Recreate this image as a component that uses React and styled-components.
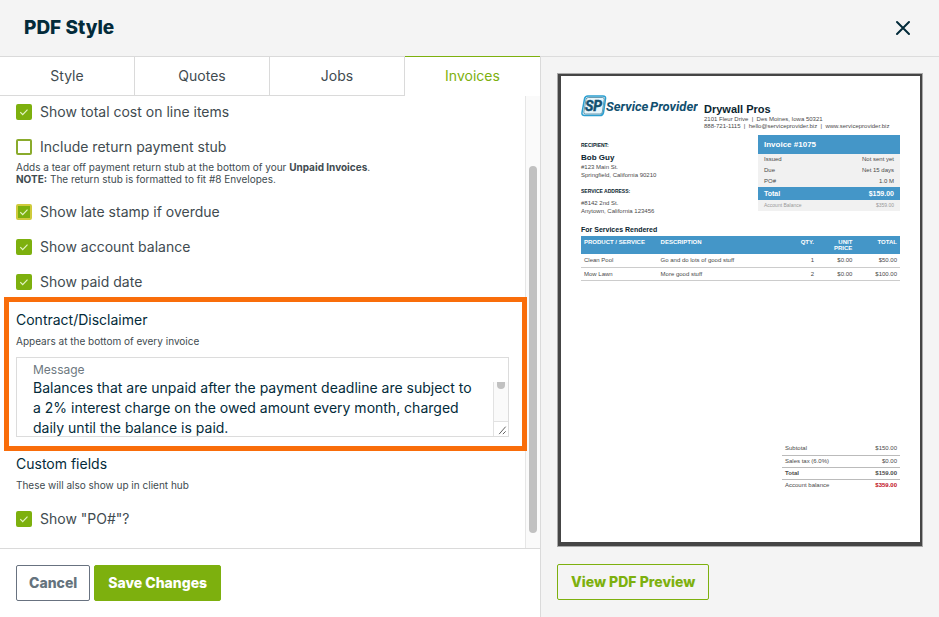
import React, { useState } from "react";
import styled, { createGlobalStyle } from "styled-components";

const GlobalStyle = createGlobalStyle`
    *, *::before, *::after {
        box-sizing: border-box;
    }
    body {
        margin: 0;
        background: #fff;
        color: #414b50;
        font-family: Inter, "Liberation Sans", sans-serif;
        font-size: 14px;
        line-height: 20px;
    }
    h1, h2, h3, p {
        margin: 0;
    }
    button, input, textarea {
        font: inherit;
        color: inherit;
        margin: 0;
    }
`;

const Modal = styled.div`
    min-height: 100vh;
    display: flex;
    flex-direction: column;
`;

const Header = styled.header`
    display: flex;
    align-items: center;
    justify-content: space-between;
    height: 57px;
    padding: 0 24px;
    background: #f4f4f4;
    border-bottom: 1px solid #dcdcdc;
`;

const Title = styled.h1`
    color: #032b3a;
    font-size: 19px;
    font-weight: 800;
    line-height: 24px;
`;

const CloseButton = styled.button`
    display: flex;
    padding: 0;
    border: 0;
    background: none;
    color: #032b3a;
    cursor: pointer;
`;

const Columns = styled.div`
    flex: 1;
    display: grid;
    grid-template-columns: minmax(0, 541fr) minmax(0, 398fr);
`;

const Settings = styled.section`
    display: flex;
    flex-direction: column;
    border-right: 1px solid #dadada;
`;

const Tabs = styled.div`
    display: grid;
    grid-template-columns: repeat(4, 1fr);
    height: 40px;
    margin-top: -1px;
`;

const Tab = styled.button`
    padding: 0;
    background: #fff;
    border: 1px solid #dadada;
    border-left: 0;
    cursor: pointer;
    ${({ $active }) => $active && `
        color: #7db00e;
        border-color: #7db00e transparent transparent;
    `}
    &:last-child {
        border-right: 0;
    }
`;

const ScrollArea = styled.div`
    flex: 1;
    display: flex;
`;

const Options = styled.div`
    flex: 1;
    min-width: 0;
    padding: 6px 16px 17px;
`;

const ScrollTrack = styled.div`
    width: 15px;
    padding: 70px 3px 15px;
    display: flex;
    background: #fafafa;
    border-left: 1px solid #e6e6e6;
`;

const ScrollThumb = styled.div`
    width: 8px;
    border-radius: 4px;
    background: #c1c1c1;
`;

const CheckRow = styled.label`
    display: flex;
    align-items: center;
    gap: 8px;
    margin-bottom: 15px;
    cursor: pointer;
`;

const CheckBox = styled.span`
    display: grid;
    width: 16px;
    height: 16px;
    > * {
        grid-area: 1 / 1;
    }
    svg {
        z-index: 1;
        pointer-events: none;
    }
`;

const CheckInput = styled.input`
    appearance: none;
    width: 16px;
    height: 16px;
    background: #fff;
    border: 2px solid #8aab2c;
    border-radius: 2px;
    &:checked {
        background: #7db00e;
        border-color: ${({ $ringed }) => ($ringed ? "#cfcb3c" : "#7db00e")};
    }
`;

const Hint = styled.p`
    font-size: 10px;
    line-height: 12px;
`;

const StubHint = styled(Hint)`
    margin: -11px 0 17px;
`;

const SectionTitle = styled.h2`
    color: #032b3a;
    font-size: 14px;
    font-weight: 400;
    line-height: 20px;
    margin-bottom: 5px;
`;

/* The frame reaches past the column and onto the scroll bar */
const Highlight = styled.section`
    position: relative;
    z-index: 1;
    margin: -10px -18px 3px -12px;
    padding: 8px 13px 9px 7px;
    border: 5px solid #f96d0a;
`;

const MessageField = styled.div`
    display: flex;
    flex-direction: column;
    height: 80px;
    margin-top: 10px;
    border: 1px solid #dcdcdc;
    color: #032b3a;
    label {
        padding: 3px 16px 0;
        color: #6d7880;
        font-size: 12px;
        line-height: 17px;
    }
`;

const MessageBody = styled.div`
    flex: 1;
    display: flex;
    min-height: 0;
`;

const MessageInput = styled.textarea`
    flex: 1;
    min-width: 0;
    padding: 0 16px;
    border: 0;
    outline: 0;
    overflow: hidden;
    resize: none;
    background: none;
    line-height: 20px;
`;

const MessageScroll = styled.div`
    width: 15px;
    margin-top: 4px;
    display: flex;
    flex-direction: column;
    justify-content: space-between;
    align-items: center;
    background: #fafafa;
    border-left: 1px solid #e2e2e2;
`;

const MessageThumb = styled.div`
    width: 8px;
    height: 7px;
    border-radius: 0 0 4px 4px;
    background: #c1c1c1;
`;

const ResizeCorner = styled.svg`
    border-top: 1px solid #e2e2e2;
    background: #fff;
`;

const CustomFields = styled.section`
    ${CheckRow} {
        margin: 18px 0 0;
    }
`;

const Footer = styled.footer`
    display: flex;
    gap: 4px;
    padding: 16px;
    border-top: 1px solid #dadada;
`;

const Button = styled.button`
    height: 36px;
    padding: 0 13px;
    border: 1px solid #7db00e;
    border-radius: 2px;
    background: ${({ $filled }) => ($filled ? "#7db00e" : "transparent")};
    color: ${({ $filled }) => ($filled ? "#fff" : "#7db00e")};
    font-weight: 800;
    cursor: pointer;
`;

const CancelButton = styled(Button)`
    padding: 0 12px;
    border-color: #687280;
    color: #65737d;
`;

const Preview = styled.section`
    display: flex;
    flex-direction: column;
    align-items: flex-start;
    gap: 17px;
    padding: 16px;
    background: #f4f4f4;
`;

const PdfFrame = styled.div`
    width: 100%;
    border: 1px solid #a9a9a9;
    background: #454545;
    padding: 2px 2px 4px 3px;
`;

const PdfPage = styled.article`
    display: flex;
    flex-direction: column;
    min-height: 466px;
    padding: 19px 20px 51px;
    background: #fff;
    color: #4a4a4a;
    font-family: "Liberation Sans", sans-serif;
    font-size: 6px;
    line-height: 7px;
    table {
        border-collapse: collapse;
    }
    th, td {
        padding: 0 3px;
        text-align: left;
    }
`;

const PdfHeader = styled.div`
    display: flex;
    gap: 6px;
`;

const Company = styled.div`
    padding-top: 7px;
    white-space: nowrap;
    h2 {
        color: #0b2530;
        font-size: 11px;
        line-height: 14px;
    }
`;

const PdfSummary = styled.div`
    display: flex;
    justify-content: space-between;
    margin-top: 5px;
`;

const Client = styled.div`
    padding-top: 6px;
    line-height: 8px;
    h3 {
        color: #0b2530;
        font-size: 5px;
        line-height: 8px;
    }
    strong {
        display: block;
        color: #0b2530;
        font-size: 8px;
        line-height: 10px;
    }
    p {
        margin: 4px 0 8px;
    }
`;

const InvoiceTable = styled.table`
    width: 142px;
    background: #f1f1f1;
    align-self: flex-start;
    th, td {
        height: 11px;
        padding: 0 6px;
        font-weight: 400;
    }
    td {
        text-align: right;
    }
    thead th {
        height: 19px;
        background: #4496c8;
        color: #fff;
        font-size: 8px;
        font-weight: 700;
    }
`;

const TotalRow = styled.tr`
    background: #4496c8;
    color: #fff;
    th, td {
        height: 13px;
        font-size: 7px;
        font-weight: 700;
    }
`;

const BalanceRow = styled.tr`
    color: #999;
    font-size: 5px;
`;

const ServicesTitle = styled.h3`
    margin-top: 1px;
    color: #0b2530;
    font-size: 7px;
    line-height: 12px;
`;

const ServicesTable = styled.table`
    width: 100%;
    thead th {
        height: 18px;
        padding-top: 3px;
        vertical-align: top;
        background: #4496c8;
        color: #fff;
        line-height: 6px;
    }
    tbody tr {
        border-bottom: 1px solid #ccc;
    }
    tbody td {
        height: 13px;
        padding-top: 1px;
    }
    th:nth-child(n + 3), td:nth-child(n + 3) {
        text-align: right;
    }
`;

const TotalsTable = styled.table`
    width: 118px;
    margin: auto 0 0 auto;
    tr + tr {
        border-top: 1px solid #bbb;
    }
    th, td {
        height: 12px;
        font-weight: 400;
    }
    td {
        text-align: right;
    }
    tr:nth-child(3) > * {
        font-weight: 700;
    }
    tr:last-child td {
        color: #c00d1c;
        font-weight: 700;
    }
`;

const Logo = () => (
  <svg width="117" height="22" viewBox="0 0 117 22" role="img" aria-label="Service Provider">
    <path
      d="M7 1H22q3 0 2.500 3L22.500 17.500q-.6 3-3.600 3H3.500q-3 0-2.500-3L3.500 4q.5-3 3.500-3z"
      fill="#e6f5fb"
      stroke="#2b9fd0"
      strokeWidth="1.500"
    />
    <path
      d="M7.500 2.500H21.500q2 0 1.700 2L21.300 17q-.4 2-2.400 2H4.500q-2 0-1.700-2L5 4.500q.4-2 2.500-2z"
      fill="none"
      stroke="#17607f"
      strokeWidth=".6"
    />
    <g fontFamily="Roboto, 'Liberation Sans', sans-serif" fontWeight="700" fontStyle="italic" fill="#125070">
      <text x="4" y="16" fontSize="14" stroke="#125070" strokeWidth=".5">SP</text>
      <text x="25" y="16" fontSize="13">Service</text>
      <text x="69" y="16" fontSize="13">Provider</text>
    </g>
  </svg>
);

const CheckOption = ({ label, checked, ringed }) => {
  const [on, setOn] = useState(checked);
  return (
    <CheckRow>
      <CheckBox>
        <CheckInput type="checkbox" checked={on} $ringed={ringed} onChange={() => setOn(!on)} />
        {on && (
          <svg width="16" height="16" viewBox="0 0 16 16" fill="none" stroke="#e4f5c4" strokeWidth="1.200">
            <path d="M4.300 8.200l2.400 2.500 4.800-5" />
          </svg>
        )}
      </CheckBox>
      {label}
    </CheckRow>
  );
};

const TABS = ["Style", "Quotes", "Jobs", "Invoices"];

const MESSAGE =
  "Balances that are unpaid after the payment deadline are subject to a 2% interest charge on the owed amount every month, charged daily until the balance is paid.";

const Invoice = () => (
  <PdfPage>
    <PdfHeader>
      <Logo />
      <Company>
        <h2>Drywall Pros</h2>
        <p>2101 Fleur Drive &nbsp;|&nbsp; Des Moines, Iowa 50321</p>
        <p>888-721-1115 &nbsp;|&nbsp; hello@serviceprovider.biz &nbsp;|&nbsp; www.serviceprovider.biz</p>
      </Company>
    </PdfHeader>
    <PdfSummary>
      <Client>
        <h3>RECIPIENT:</h3>
        <p>
          <strong>Bob Guy</strong>
          #123 Main St.
          <br />
          Springfield, California 90210
        </p>
        <h3>SERVICE ADDRESS:</h3>
        <p>
          #8142 2nd St.
          <br />
          Anytown, California 123456
        </p>
      </Client>
      <InvoiceTable>
        <thead>
          <tr><th colSpan={2}>Invoice #1075</th></tr>
        </thead>
        <tbody>
          <tr><th>Issued</th><td>Not sent yet</td></tr>
          <tr><th>Due</th><td>Net 15 days</td></tr>
          <tr><th>PO#</th><td>1.0 M</td></tr>
          <TotalRow><th>Total</th><td>$159.00</td></TotalRow>
          <BalanceRow><th>Account Balance</th><td>$359.00</td></BalanceRow>
        </tbody>
      </InvoiceTable>
    </PdfSummary>
    <ServicesTitle>For Services Rendered</ServicesTitle>
    <ServicesTable>
      <colgroup>
        <col width="24%" />
        <col width="38%" />
        <col width="12%" />
        <col width="12%" />
        <col width="14%" />
      </colgroup>
      <thead>
        <tr>
          <th>PRODUCT / SERVICE</th>
          <th>DESCRIPTION</th>
          <th>QTY.</th>
          <th>UNIT PRICE</th>
          <th>TOTAL</th>
        </tr>
      </thead>
      <tbody>
        <tr><td>Clean Pool</td><td>Go and do lots of good stuff</td><td>1</td><td>$0.00</td><td>$50.00</td></tr>
        <tr><td>Mow Lawn</td><td>More good stuff</td><td>2</td><td>$0.00</td><td>$100.00</td></tr>
      </tbody>
    </ServicesTable>
    <TotalsTable>
      <tbody>
        <tr><th>Subtotal</th><td>$150.00</td></tr>
        <tr><th>Sales tax (6.0%)</th><td>$0.00</td></tr>
        <tr><th>Total</th><td>$159.00</td></tr>
        <tr><th>Account balance</th><td>$359.00</td></tr>
      </tbody>
    </TotalsTable>
  </PdfPage>
);

const App = () => {
  const [tab, setTab] = useState("Invoices");

  return (
    <Modal>
      <GlobalStyle />
      <Header>
        <Title>PDF Style</Title>
        <CloseButton aria-label="Close">
          <svg width="24" height="24" viewBox="0 0 24 24" fill="none" stroke="currentColor" strokeWidth="2" strokeLinecap="round">
            <path d="M6 6l12 12M18 6L6 18" />
          </svg>
        </CloseButton>
      </Header>
      <Columns>
        <Settings>
          <Tabs role="tablist">
            {TABS.map((name) => (
              <Tab key={name} role="tab" aria-selected={tab === name} $active={tab === name} onClick={() => setTab(name)}>
                {name}
              </Tab>
            ))}
          </Tabs>
          <ScrollArea>
            <Options>
              <CheckOption label="Show total cost on line items" checked />
              <CheckOption label="Include return payment stub" checked={false} />
              <StubHint>
                Adds a tear off payment return stub at the bottom of your <strong>Unpaid Invoices</strong>.
                <br />
                <strong>NOTE:</strong> The return stub is formatted to fit #8 Envelopes.
              </StubHint>
              <CheckOption label="Show late stamp if overdue" checked ringed />
              <CheckOption label="Show account balance" checked />
              <CheckOption label="Show paid date" checked />
              <Highlight>
                <SectionTitle>Contract/Disclaimer</SectionTitle>
                <Hint>Appears at the bottom of every invoice</Hint>
                <MessageField>
                  <label htmlFor="message">Message</label>
                  <MessageBody>
                    <MessageInput id="message" defaultValue={MESSAGE} />
                    <MessageScroll>
                      <MessageThumb />
                      <ResizeCorner width="14" height="15" viewBox="0 0 14 15" stroke="#555" strokeWidth="1">
                        <path d="M5 13l7-8M9 13l3-3" />
                      </ResizeCorner>
                    </MessageScroll>
                  </MessageBody>
                </MessageField>
              </Highlight>
              <CustomFields>
                <SectionTitle>Custom fields</SectionTitle>
                <Hint>These will also show up in client hub</Hint>
                <CheckOption label={'Show "PO#"?'} checked />
              </CustomFields>
            </Options>
            <ScrollTrack>
              <ScrollThumb />
            </ScrollTrack>
          </ScrollArea>
          <Footer>
            <CancelButton>Cancel</CancelButton>
            <Button $filled>Save Changes</Button>
          </Footer>
        </Settings>
        <Preview>
          <PdfFrame>
            <Invoice />
          </PdfFrame>
          <Button>View PDF Preview</Button>
        </Preview>
      </Columns>
    </Modal>
  );
};

export default App;
